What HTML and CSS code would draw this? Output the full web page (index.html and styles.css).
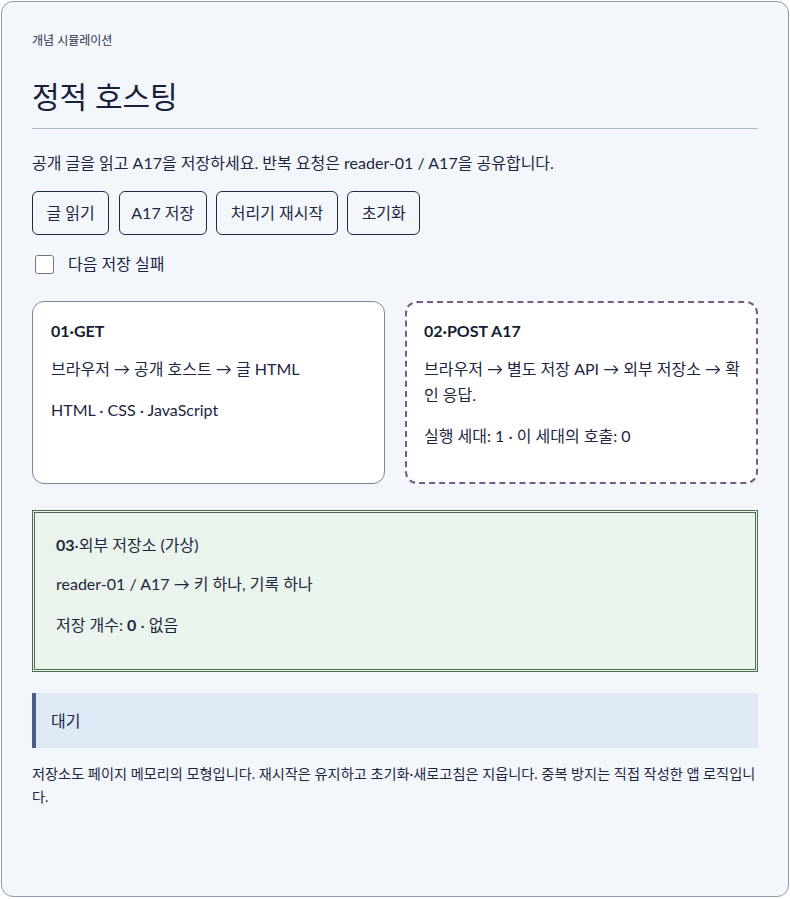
FILE: index.html
```html
<!DOCTYPE html>
<html lang="ko">
<head>
<meta charset="utf-8">
<title>정적 호스팅</title>
<link rel="stylesheet" href="styles.css">
</head>
<body>
<div class="page">
  <main class="shell">
    <header class="head">
      <div class="eyebrow">개념 시뮬레이션</div>
      <h1 class="title">정적 호스팅</h1>
    </header>
    <p class="lead">공개 글을 읽고 A17을 저장하세요. 반복 요청은 reader-01 / A17을 공유합니다.</p>
    <div class="actions">
      <button class="btn" type="button">글 읽기</button>
      <button class="btn btn-narrow" type="button">A17 저장</button>
      <button class="btn" type="button">처리기 재시작</button>
      <button class="btn" type="button">초기화</button>
    </div>
    <label class="check">
      <input type="checkbox" class="check-box">
      <span>다음 저장 실패</span>
    </label>
    <div class="stages">
      <section class="stage stage-get">
        <h2 class="stage-title">01·GET</h2>
        <p class="stage-text">브라우저 → 공개 호스트 → 글 HTML</p>
        <p class="stage-text">HTML · CSS · JavaScript</p>
      </section>
      <section class="stage stage-post">
        <h2 class="stage-title">02·POST A17</h2>
        <p class="stage-text">브라우저 → 별도 저장 API → 외부 저장소 → 확인 응답.</p>
        <p class="stage-text">실행 세대: 1 · 이 세대의 호출: 0</p>
      </section>
    </div>
    <section class="store">
      <p class="store-title"><b>03</b>·외부 저장소 (가상)</p>
      <p class="stage-text">reader-01 / A17 → 키 하나, 기록 하나</p>
      <p class="stage-text">저장 개수: <b>0</b> · 없음</p>
    </section>
    <div class="status">대기</div>
    <p class="note">저장소도 페이지 메모리의 모형입니다. 재시작은 유지하고 초기화·새로고침은 지웁니다. 중복 방지는 직접 작성한 앱 로직입니다.</p>
  </main>
</div>
</body>
</html>
```
FILE: styles.css
```css
html, body {
  margin: 0;
  padding: 0;
  background: #ffffff;
}
body {
  font-family: Lato, "Noto Sans CJK KR", sans-serif;
  font-size: 16px;
  color: #1c2640;
}
.page {
  padding: 1px;
}
.shell {
  box-sizing: border-box;
  width: 788px;
  min-height: 896px;
  border: 1px solid #8f9bad;
  border-radius: 12px;
  background: #f3f7fc;
  padding: 30px;
}
.head {
  border-bottom: 1px solid #a7b6ca;
  padding-bottom: 14px;
}
.eyebrow {
  font-size: 12px;
  line-height: 18px;
  color: #2a3448;
}
.title {
  margin: 28px 0 0 0;
  font-size: 30px;
  line-height: 36px;
  font-weight: 400;
  color: #16213a;
}
.lead {
  margin: 22px 0 0 0;
  font-size: 16px;
  line-height: 24px;
}
.actions {
  display: flex;
  gap: 9.5px;
  margin-top: 16px;
}
.btn {
  font-family: inherit;
  font-size: 16px;
  line-height: 20px;
  color: #1c2640;
  background: transparent;
  border: 1px solid #1e2b45;
  border-radius: 6px;
  padding: 11px 13.5px;
  height: 44px;
}
.btn-narrow {
  padding: 11px 11.5px;
}
.check {
  display: flex;
  align-items: center;
  gap: 14px;
  margin-top: 19px;
  font-size: 16px;
  line-height: 20px;
}
.check-box {
  width: 19px;
  height: 19px;
  margin: 0 0 0 3px;
}
.stages {
  display: grid;
  grid-template-columns: 1fr 1fr;
  gap: 20px;
  margin-top: 27px;
}
.stage {
  background: #ffffff;
  border-radius: 12px;
  padding: 18px;
}
.stage-get {
  border: 1px solid #7b879a;
  padding-top: 19px;
}
.stage-post {
  border: 2px dashed #7a5a86;
  padding: 18px 15px 18px 17px;
}
.stage-title {
  margin: 0;
  font-size: 16px;
  line-height: 20px;
  font-weight: 700;
  color: #151d30;
}
.stage-text {
  margin: 15px 0;
  font-size: 16px;
  line-height: 26px;
}
.stage-text b {
  font-weight: 700;
}
.store {
  margin-top: 26px;
  background: #eaf4ec;
  border: 3px double #4d6b4d;
  padding: 21px 21px 16px;
}
.store-title {
  margin: 0;
  font-size: 16px;
  line-height: 22px;
}
.store-title b {
  font-weight: 700;
}
.status {
  margin-top: 21px;
  background: #dfe9f6;
  border-left: 4px solid #4b5d86;
  padding: 16px 15px;
  font-size: 16px;
  line-height: 23px;
}
.note {
  margin: 14px 0 0 0;
  font-size: 14.2px;
  line-height: 23px;
}
```
